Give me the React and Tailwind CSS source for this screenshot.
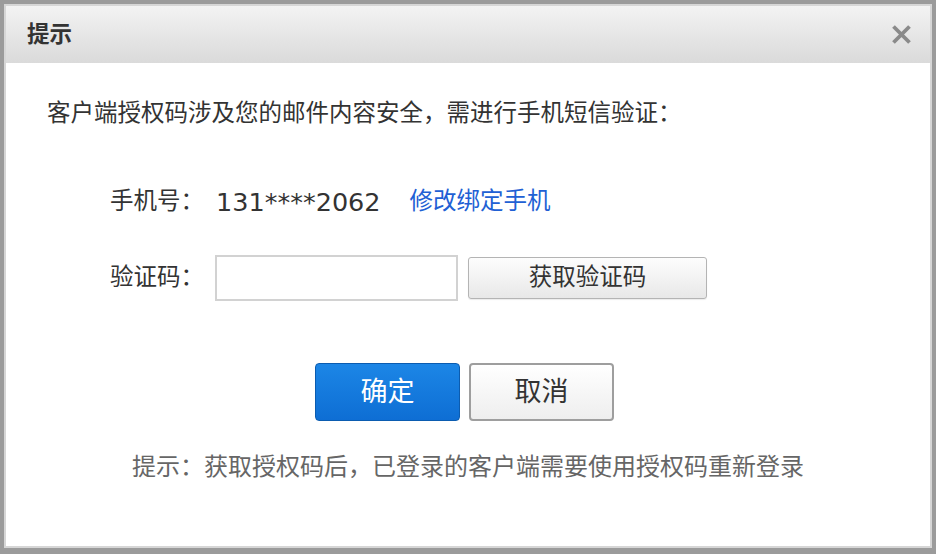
import React from 'react';

const FONT = { fontFamily: '"DejaVu Sans", "Noto Sans CJK SC", sans-serif' };

const CloseIcon = () => (
  <svg width="21" height="21" viewBox="0 0 21 21">
    <path d="M2.5 2.5 L18.5 18.5 M18.5 2.5 L2.5 18.5" stroke="#8a8a8a" strokeWidth="3.8" strokeLinecap="butt" />
  </svg>
);

export default function App() {
  return (
    <div className="w-[936px] h-[554px] bg-[#9b9b9b] pt-[4px] pr-[4px] pb-[6px] pl-[4px]" style={FONT}>
      <div className="h-full flex flex-col border-2 border-[#d6d6d6] bg-white">
        {/* Title bar */}
        <div className="h-[57px] shrink-0 flex items-center justify-between pl-[21px] pr-[18px] bg-gradient-to-b from-[#f3f3f3] to-[#dadada]">
          <span className="text-[22.5px] font-bold text-[#333] leading-none">提示</span>
          <CloseIcon />
        </div>

        {/* Body */}
        <div className="flex-1 flex flex-col pt-[34px] text-[#333]">
          <p className="pl-[41px] h-[32px] leading-[32px] text-[23.5px]">
            客户端授权码涉及您的邮件内容安全，需进行手机短信验证：
          </p>

          <div className="mt-[57px] pl-[104px] h-[32px] flex items-center text-[23.5px]">
            <span className="w-[106px]">手机号：</span>
            <span className="text-[25.5px]">131****2062</span>
            <a href="#" className="ml-[29px] text-[#2160d4]">修改绑定手机</a>
          </div>

          <div className="mt-[37px] pl-[104px] h-[46px] flex items-center text-[23.5px]">
            <span className="w-[105px]">验证码：</span>
            <input className="w-[243px] h-[46px] border-2 border-[#d2d2d2] outline-none px-2" />
            <button className="ml-[10px] w-[239px] h-[42px] rounded-[3px] border border-[#b4b4b4] bg-gradient-to-b from-[#fdfdfd] to-[#e8e8e8] text-[23.5px] text-[#333] shadow-[0_1px_1px_rgba(0,0,0,0.08)]">
              获取验证码
            </button>
          </div>

          <div className="mt-[62px] pl-[309px] flex gap-[9px]">
            <button className="w-[145px] h-[58px] rounded-[4px] border border-[#0b5cb0] bg-gradient-to-b from-[#1c86e6] to-[#0e6ed4] text-white text-[27px]">
              确定
            </button>
            <button className="w-[145px] h-[58px] rounded-[4px] border-2 border-[#9e9e9e] bg-gradient-to-b from-white to-[#eeeeee] text-[#333] text-[27px]">
              取消
            </button>
          </div>

          <p className="mt-[30px] h-[32px] leading-[32px] text-center text-[24px] text-[#666]">
            提示：获取授权码后，已登录的客户端需要使用授权码重新登录
          </p>
        </div>
      </div>
    </div>
  );
}
